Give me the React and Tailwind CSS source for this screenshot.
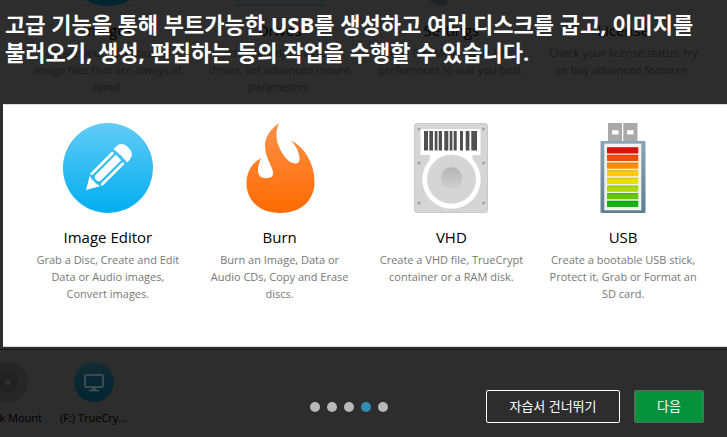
/**
 * App.jsx - Tutorial overlay shown on top of the dimmed tools screen.
 */

import React, { useState } from 'react'

function ImageEditorIcon() {
  return (
    <svg className="w-[90px] h-[90px]" viewBox="0 0 90 90" aria-hidden="true">
      <defs>
        <linearGradient id="editor-fill" x1="0" y1="0" x2="0" y2="1">
          <stop offset="0" stopColor="#62cbf5" />
          <stop offset="1" stopColor="#00aeef" />
        </linearGradient>
      </defs>
      <circle cx="45" cy="45" r="45" fill="url(#editor-fill)" />
      <g transform="translate(23 67) rotate(-45)" fill="#fff">
        <path d="M0 0 L13 -7.5 Q11 -3.5 12 -1 Q11 2 13 7.5 Z" />
        <rect x="14" y="-8.8" width="32" height="2.8" rx="1.4" />
        <rect x="14" y="6" width="32" height="2.8" rx="1.4" />
        <path d="M17 -3.8 H46 V3.8 H17 Q14 3.5 14 0 Q14 -3.5 17 -3.8 Z" />
        <path d="M48.5 -9.5 H52 Q60 -9 60 0 Q60 9 52 9.5 H48.5 Q50 0 48.5 -9.5 Z" />
      </g>
    </svg>
  )
}

function BurnIcon() {
  return (
    <svg className="w-[70px] h-[90px]" viewBox="0 0 70 90" aria-hidden="true">
      <defs>
        <linearGradient id="burn-fill" x1="0" y1="0" x2="0" y2="1">
          <stop offset="0" stopColor="#ff914a" />
          <stop offset="1" stopColor="#ff6a00" />
        </linearGradient>
      </defs>
      <path
        fill="url(#burn-fill)"
        d="M34 0 C30 9 31 18 35 26 C39 34 44 40 50 40.5 C55 40.5 55 36 54 32 C53 26 50 22 46 17.5 C61 25 69.5 42 69.5 59 C69.5 78 55 90 35.5 90 C15 90 1.5 78 1.5 60 C1.5 49 7 40 16 35 C13 42 12 48 14 52 C16 55 20 55.5 23 55 C28 54.5 29 51 27.5 47 C25 39 20 33 20 23 C20 13 26 6 34 0 Z"
      />
    </svg>
  )
}

function VhdIcon() {
  const bars = [[10, 4], [15.3, 3.7], [20.7, 2.7], [24.7, 3.3], [30.3, 4], [35.7, 2.7], [39.7, 3], [46, 3], [51.7, 3.7], [57.3, 5.7]]
  const screws = [[5, 6], [69.5, 6], [5, 40], [69.5, 40], [5, 80], [69.5, 80]]
  return (
    <svg className="w-[74px] h-[90px]" viewBox="0 0 74 90" aria-hidden="true">
      <defs>
        <linearGradient id="vhd-hub" x1="0" y1="0" x2="0" y2="1">
          <stop offset="0" stopColor="#b5b5b5" />
          <stop offset="1" stopColor="#cfcfcf" />
        </linearGradient>
      </defs>
      <rect x="0.5" y="0.5" width="73" height="89" rx="2" fill="#d5d5d5" stroke="#c8c8c8" />
      <path fill="#fff" d="M6.5 6 H66.5 V32 H60 Q57 32 59 37 H15.5 Q17 32 14 32 H6.5 Z" />
      <circle cx="37.5" cy="56.5" r="29.2" fill="#fff" />
      <circle cx="37.5" cy="56.2" r="24.5" fill="#d5d5d5" />
      <circle cx="37.5" cy="55" r="10.7" fill="url(#vhd-hub)" />
      {bars.map(([x, w]) => <rect key={x} x={x} y="8" width={w} height="19.5" fill="#505050" />)}
      {screws.map(([x, y]) => <circle key={`${x}-${y}`} cx={x} cy={y} r="1.5" fill="#a2a2a2" />)}
    </svg>
  )
}

function UsbIcon() {
  const levels = ['#dc1408', '#f04b08', '#ff8c00', '#ffca00', '#e9df00', '#acd908', '#66c60a', '#12b312']
  return (
    <svg className="w-[46px] h-[90px]" viewBox="0 0 46 90" aria-hidden="true">
      <defs>
        <linearGradient id="usb-body" x1="0" y1="0" x2="0" y2="1">
          <stop offset="0" stopColor="#8aa6b4" />
          <stop offset="1" stopColor="#5d7f8e" />
        </linearGradient>
      </defs>
      <path fill="#a9a9a9" d="M8 0 H22 V18 H8 Z M23.3 0 H37.5 V18 H23.3 Z" />
      <path fill="#fff" d="M12 7.3 H18.5 V11.5 H12 Z M27 7.3 H33.5 V11.5 H27 Z" />
      <rect x="0.5" y="18" width="45" height="72" rx="1" fill="url(#usb-body)" />
      <rect x="4.3" y="20.7" width="37" height="66.6" fill="#f1f2f4" />
      {levels.map((color, i) => (
        <g key={color}>
          <rect x="7" y={24.2 + i * 7.65} width="31.3" height="6.2" rx="0.6" fill={color} />
          <rect x="7" y={24.2 + i * 7.65} width="31.3" height="1" fill="#000" opacity="0.12" />
        </g>
      ))}
    </svg>
  )
}

const TOOLS = [
  { title: 'Image Editor', text: 'Grab a Disc, Create and Edit Data or Audio images, Convert images.', Icon: ImageEditorIcon },
  { title: 'Burn', text: 'Burn an Image, Data or Audio CDs, Copy and Erase discs.', Icon: BurnIcon },
  { title: 'VHD', text: 'Create a VHD file, TrueCrypt container or a RAM disk.', Icon: VhdIcon },
  { title: 'USB', text: 'Create a bootable USB stick, Protect it, Grab or Format an SD card.', Icon: UsbIcon },
]

const DIMMED_TOOLS = [
  { title: 'Images', text: 'Create your collection of image files that are always at hand.' },
  { title: 'Drives', text: 'Add and adjust virtual\ndrives, set advanced mount parameters.' },
  { title: 'Settings', text: 'Tune DAEMON Tools Ultra preferences to suit you best.' },
  { title: 'License', text: 'Check your license status, try or buy advanced features.' },
]

function DimmedIcon({ index }) {
  return (
    <svg className="w-[90px] h-[6px]" viewBox="0 0 90 6" aria-hidden="true">
      {index === 0 && <circle cx="45" cy="-39" r="45" fill="#022533" />}
      {index === 1 && <rect x="2" y="-30" width="86" height="35" rx="2" fill="#2d2d2d" stroke="#1c2b30" strokeWidth="2" />}
      {index === 2 && <path d="M23 0 Q32 8 41 4 V0 Z" fill="#1d2226" />}
    </svg>
  )
}

export default function App() {
  const [step, setStep] = useState(3)

  return (
    <div className="relative min-h-screen overflow-hidden bg-[#2d2d2d] font-['Open_Sans','Noto_Sans_CJK_KR',sans-serif]">
      {/* Dimmed row above the highlighted one */}
      <section className="grid grid-cols-4 h-[104px] pl-[22px] pr-[18px] text-center">
        {DIMMED_TOOLS.map((tool, i) => (
          <div key={tool.title} className="flex flex-col items-center px-[9px]">
            <DimmedIcon index={i} />
            <h2 className="mt-3 text-[15px] leading-6 text-black">{tool.title}</h2>
            <p className="mt-0.5 text-[11px] leading-[17px] whitespace-pre-line text-[#191919]">{tool.text}</p>
          </div>
        ))}
      </section>

      {/* Highlighted tools */}
      <section className="grid grid-cols-4 ml-[3px] h-[243px] pt-[18px] pl-[19px] pr-[18px] bg-white border-y border-[#dedede] text-center">
        {TOOLS.map(({ title, text, Icon }) => (
          <div key={title} className="flex flex-col items-center px-[11px]">
            <Icon />
            <h2 className="mt-3 text-[15px] leading-6 text-black">{title}</h2>
            <p className="mt-0.5 text-[11px] leading-[17px] text-[#777]">{text}</p>
          </div>
        ))}
      </section>

      {/* Dimmed device bar */}
      <section className="mt-0.5 flex h-[88px] border-t border-[#1c1c1c] pt-3 text-[11px] text-black">
        <div className="flex w-[42px] flex-col items-end">
          <svg className="mr-3.5 w-10 h-10 shrink-0" viewBox="0 0 40 40" aria-hidden="true">
            <circle cx="20" cy="20" r="20" fill="#262626" />
            <circle cx="20" cy="20" r="10" fill="#222" />
            <circle cx="20" cy="20" r="3" fill="#303030" />
          </svg>
          <span className="mt-2 leading-4 whitespace-nowrap">Disk Mount</span>
        </div>
        <div className="ml-[18px] flex flex-col items-center">
          <svg className="w-10 h-10" viewBox="0 0 40 40" aria-hidden="true">
            <defs>
              <linearGradient id="device-fill" x1="0" y1="0" x2="0" y2="1">
                <stop offset="0" stopColor="#142c35" />
                <stop offset="1" stopColor="#002531" />
              </linearGradient>
            </defs>
            <circle cx="20" cy="20" r="20" fill="url(#device-fill)" />
            <rect x="11" y="13" width="18" height="12" rx="1" fill="none" stroke="#3b4b51" strokeWidth="2" />
            <path d="M18 26 H22 V27.5 H25 V29.5 H15 V27.5 H18 Z" fill="#3b4b51" />
          </svg>
          <span className="mt-2 leading-4">(F:) TrueCry...</span>
        </div>
      </section>

      {/* Tutorial text and controls */}
      <h1 className="absolute inset-x-0 top-2.5 px-[5px] text-[22px] leading-7 font-bold text-white break-keep">
        고급 기능을 통해 부트가능한 USB를 생성하고 여러 디스크를 굽고, 이미지를 불러오기, 생성, 편집하는 등의 작업을 수행할 수 있습니다.
      </h1>
      <nav className="absolute right-[23px] bottom-[14px] left-[310px] flex items-center justify-between">
        <div className="flex gap-[7px]">
          {[0, 1, 2, 3, 4].map((i) => (
            <button
              key={i}
              onClick={() => setStep(i)}
              aria-label={`${i + 1}`}
              className={`w-2.5 h-2.5 rounded-full ${i === step ? 'bg-[#338db2]' : 'bg-[#b8b8b8]'}`}
            />
          ))}
        </div>
        <div className="flex gap-3.5 text-[13px] text-white">
          <button className="h-[33px] w-[134px] rounded-xs border border-white">자습서 건너뛰기</button>
          <button onClick={() => setStep((step + 1) % 5)} className="h-[33px] w-[70px] rounded-xs border border-[#656565] bg-[#04923c]">
            다음
          </button>
        </div>
      </nav>
    </div>
  )
}
